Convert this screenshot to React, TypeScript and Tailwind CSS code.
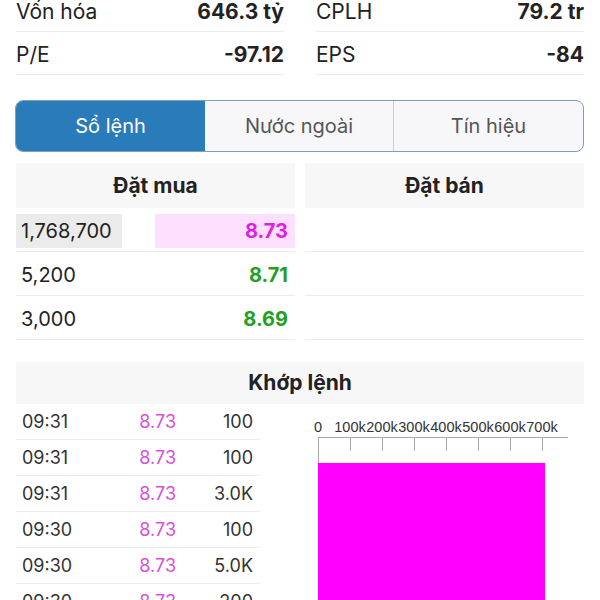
import React from "react"

const stats = [
	[
		{ label: "Vốn hóa", value: "646.3 tỷ" },
		{ label: "CPLH", value: "79.2 tr" },
	],
	[
		{ label: "P/E", value: "-97.12" },
		{ label: "EPS", value: "-84" },
	],
]

const bids = [
	{ qty: "1,768,700", price: "8.73", top: true },
	{ qty: "5,200", price: "8.71", top: false },
	{ qty: "3,000", price: "8.69", top: false },
]

const trades = [
	{ time: "09:31", price: "8.73", vol: "100" },
	{ time: "09:31", price: "8.73", vol: "100" },
	{ time: "09:31", price: "8.73", vol: "3.0K" },
	{ time: "09:30", price: "8.73", vol: "100" },
	{ time: "09:30", price: "8.73", vol: "5.0K" },
	{ time: "09:30", price: "8.73", vol: "200" },
]

const ticks = ["0", "100k", "200k", "300k", "400k", "500k", "600k", "700k"]

const VolumeChart = () => (
	<svg width="324" height="200" className="block">
		{ticks.map((t, i) => (
			<text
				key={t}
				x={58 + 32 * i}
				y={27.5}
				textAnchor="middle"
				fontSize="14.5"
				fill="#333"
				fontFamily="Liberation Sans, Arial, sans-serif"
			>
				{t}
			</text>
		))}
		<line x1="58" y1="33.5" x2="308" y2="33.5" stroke="#a8a8a8" />
		<line x1="58.5" y1="33" x2="58.5" y2="59" stroke="#a8a8a8" />
		{ticks.slice(1).map((t, i) => (
			<line
				key={t}
				x1={90.5 + 32 * i}
				y1="33"
				x2={90.5 + 32 * i}
				y2="47"
				stroke="#a8a8a8"
			/>
		))}
		<rect x="58" y="59" width="227" height="141" fill="#ff00ff" />
	</svg>
)

export default function App() {
	return (
		<div className="w-[600px] h-[600px] overflow-hidden bg-white text-[#222] font-['Inter','Liberation_Sans',Arial,sans-serif]">
			{/* Stats */}
			<div className="-mt-[11px] grid grid-cols-2 gap-x-8 px-4">
				{stats.map((row) =>
					row.map((s) => (
						<div
							key={s.label}
							className="flex h-[43px] items-center justify-between border-b border-[#ececec] pt-[4px] text-[21px]"
						>
							<span>{s.label}</span>
							<span className="font-bold">{s.value}</span>
						</div>
					))
				)}
			</div>

			{/* Tabs */}
			<div className="mt-[25px] ml-[15px] mr-4 grid h-[52px] grid-cols-3 overflow-hidden rounded-lg border border-[#7d9fbd] bg-[#f7f7f9] text-[20px] text-[#555]">
				<div className="flex items-center justify-center bg-[#2a7bba] text-white">Sổ lệnh</div>
				<div className="flex items-center justify-center border-r border-[#c9ccd0]">Nước ngoài</div>
				<div className="flex items-center justify-center">Tín hiệu</div>
			</div>

			{/* Order book */}
			<div className="mt-[11px] grid grid-cols-[279px_279px] gap-x-[10px] px-4">
				<div>
					<div className="flex h-[45px] items-center justify-center bg-[#f7f7f7] text-[21px] font-bold">
						Đặt mua
					</div>
					{bids.map((b) => (
						<div
							key={b.price}
							className="flex h-[44px] items-center justify-between border-b border-[#ececec] pt-[2px] text-[20px]"
						>
							<span className={b.top ? "flex h-[34px] w-[106px] items-center bg-[#ebebeb] pl-[5px]" : "pl-[5px]"}>
								{b.qty}
							</span>
							<span
								className={
									b.top
										? "flex h-[34px] w-[140px] items-center justify-end bg-[#fde0fd] pr-[7px] font-bold text-[#e020e0]"
										: "pr-[7px] font-bold text-[#1fa01f]"
								}
							>
								{b.price}
							</span>
						</div>
					))}
				</div>
				<div>
					<div className="flex h-[45px] items-center justify-center bg-[#f7f7f7] text-[21px] font-bold">
						Đặt bán
					</div>
					{bids.map((b) => (
						<div key={b.price} className="h-[44px] border-b border-[#ececec]" />
					))}
				</div>
			</div>

			{/* Matched orders */}
			<div className="mt-[22px] px-4">
				<div className="flex h-[42px] items-center justify-center bg-[#f7f7f7] text-[21px] font-bold">
					Khớp lệnh
				</div>
				<div className="flex">
					<div className="w-[244px] shrink-0">
						{trades.map((t, i) => (
							<div
								key={i}
								className="flex h-[36px] items-center border-b border-[#ececec] text-[18px] text-[#333]"
							>
								<span className="flex-1 pl-[6px]">{t.time}</span>
								<span className="w-[70px] text-right text-[#d94fd9]">{t.price}</span>
								<span className="w-[84px] pr-[7px] text-right">{t.vol}</span>
							</div>
						))}
					</div>
					<VolumeChart />
				</div>
			</div>
		</div>
	)
}
